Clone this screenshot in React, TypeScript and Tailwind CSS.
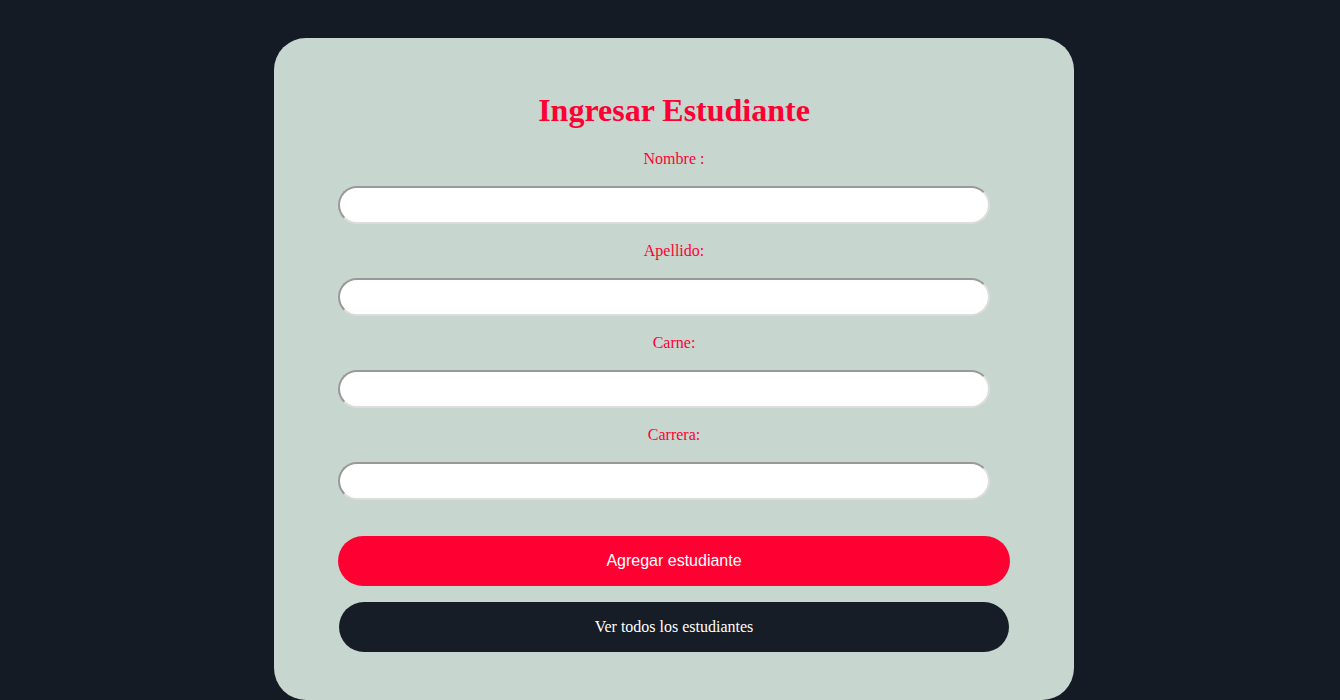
import React from "react";

const fields = ["Nombre :", "Apellido:", "Carne:", "Carrera:"];

const App: React.FC = () => {
  return (
    <div className="min-h-[700px] w-full bg-[#141b24] pt-[38px] pl-2">
      <div className="mx-auto w-[800px] rounded-[32px] bg-[#c7d6cf] px-16 pt-[54px] pb-[48px]">
        {/* Title */}
        <h1 className="h-[37px] text-center font-['Liberation_Serif',serif] text-[32px] font-bold leading-[37px] text-[#ff0033]">
          Ingresar Estudiante
        </h1>

        {/* Form fields */}
        <form className="flex flex-col" onSubmit={(e) => e.preventDefault()}>
          {fields.map((label, i) => (
            <div key={label} className={i === 0 ? "mt-[21px]" : "mt-[18px]"}>
              <label className="block h-[18px] text-center font-['Liberation_Serif',serif] text-base leading-[18px] text-[#ff0033]">
                {label}
              </label>
              <input
                type="text"
                className="mt-[18px] block h-[38px] w-[652px] rounded-full border-2 border-t-[#999999] border-l-[#999999] border-r-[#dddddd] border-b-[#dddddd] bg-white px-3 outline-none"
              />
            </div>
          ))}

          <button
            type="submit"
            className="mt-9 h-[50px] w-full rounded-full bg-[#ff0033] font-['Liberation_Sans',sans-serif] text-base text-white"
          >
            Agregar estudiante
          </button>
          <button
            type="button"
            className="mx-px mt-4 h-[50px] rounded-full bg-[#161d27] font-['Liberation_Serif',serif] text-base text-white"
          >
            Ver todos los estudiantes
          </button>
        </form>
      </div>
    </div>
  );
};

export default App;
